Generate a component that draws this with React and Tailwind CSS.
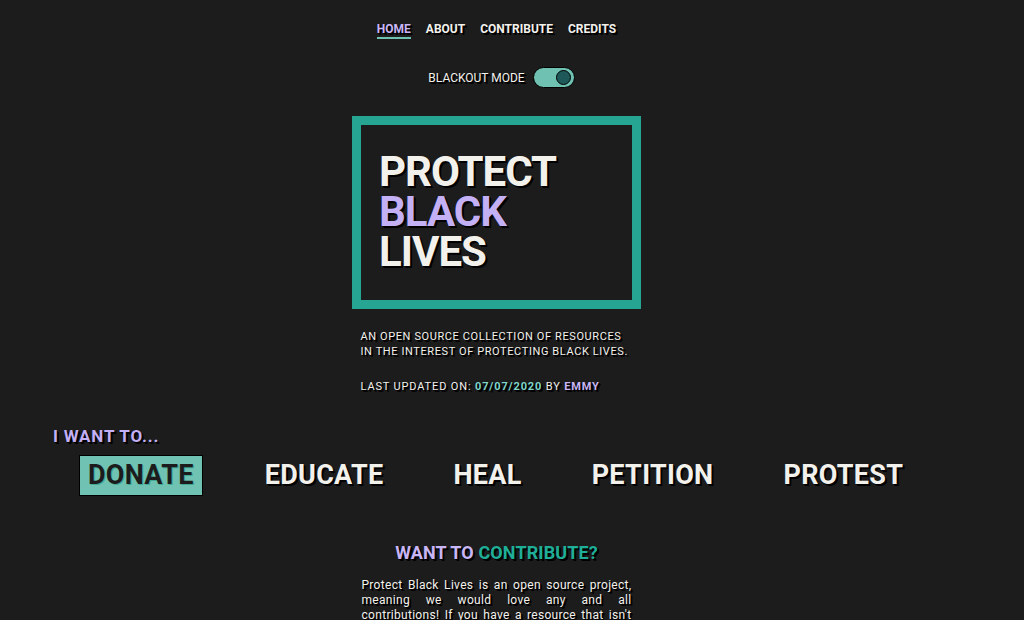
export default function App() {
    const shadow = "[text-shadow:1px_1px_0_#000,2px_2px_0_#000]"
    const options = ["DONATE", "EDUCATE", "HEAL", "PETITION", "PROTEST"]

    return (
        <div className="h-screen overflow-hidden bg-[#1c1c1c] text-[#f3f1ec] font-['Roboto',sans-serif]">
            <div className="w-[993px]">
                {/* Nav */}
                <nav className="flex justify-center gap-[15px] pt-[22px] text-[12px] font-bold">
                    <a className={`text-[#c9b6f5] border-b-2 border-[#6fc2b1] leading-[15px] ${shadow}`}>HOME</a>
                    <a className={`leading-[15px] ${shadow}`}>ABOUT</a>
                    <a className={`leading-[15px] ${shadow}`}>CONTRIBUTE</a>
                    <a className={`leading-[15px] ${shadow}`}>CREDITS</a>
                </nav>

                {/* Blackout toggle */}
                <div className="flex justify-center items-center gap-[8px] mt-[28px] pl-[10px]">
                    <span className={`text-[12px] ${shadow}`}>BLACKOUT MODE</span>
                    <div className="w-[42px] h-[21px] shrink-0 rounded-full bg-[#6fc2b1] border border-black flex items-center justify-end pr-[3px]">
                        <div className="w-[15px] h-[15px] rounded-full bg-[#1e5858] border border-black" />
                    </div>
                </div>

                {/* Hero box */}
                <div className="flex justify-center mt-[28px]">
                    <div className="w-[289px] h-[193px] border-[9px] border-[#26a592] pl-[18px] pt-[27px]">
                        <h1 className={`text-[42px] font-bold leading-[40px] tracking-[-1px] ${shadow}`}>
                            PROTECT<br />
                            <span className="text-[#c4b0f5]">BLACK</span><br />
                            LIVES
                        </h1>
                    </div>
                </div>

                {/* Description */}
                <div className="flex flex-col items-center mt-[20px]">
                    <p className={`w-[272px] text-[11px] leading-[15px] tracking-[0.6px] ${shadow}`}>
                        AN OPEN SOURCE COLLECTION OF RESOURCES IN THE INTEREST OF PROTECTING BLACK LIVES.
                    </p>
                    <p className={`w-[272px] mt-[20px] text-[11px] leading-[15px] tracking-[0.85px] ${shadow}`}>
                        LAST UPDATED ON: <span className="text-[#7fd6ca] font-bold">07/07/2020</span> BY <span className="text-[#c9b6f5] font-bold">EMMY</span>
                    </p>
                </div>

                {/* I want to */}
                <div className="mt-[32px] pl-[53px]">
                    <h2 className={`text-[17px] font-bold text-[#c4b0f5] leading-[20px] tracking-[0.8px] ${shadow}`}>I WANT TO...</h2>
                    <div className="flex gap-[54px] mt-[9px] pl-[26px]">
                        {options.map((o, i) => (
                            <a
                                key={o}
                                className={`px-[8px] h-[41px] flex items-center text-[27px] font-bold tracking-[0.3px] ${
                                    i === 0
                                        ? "bg-[#70c2b2] border border-black text-[#1c1c1c] [text-shadow:1px_1px_0_#3fa996]"
                                        : shadow
                                }`}
                            >
                                {o}
                            </a>
                        ))}
                    </div>
                </div>

                {/* Contribute */}
                <div className="flex flex-col items-center mt-[46px]">
                    <h2 className={`text-[18px] font-bold leading-[22px] tracking-[0.1px] ${shadow}`}>
                        <span className="text-[#c9b6f5]">WANT TO </span>
                        <span className="text-[#1fae98]">CONTRIBUTE?</span>
                    </h2>
                    <p className={`w-[270px] mt-[14px] text-[12px] leading-[15px] text-justify tracking-[0.3px] ${shadow}`}>
                        Protect Black Lives is an open source project, meaning we would love any and all contributions! If you have a resource that isn't listed here, please reach out and let us know.
                    </p>
                </div>
            </div>
        </div>
    )
}
